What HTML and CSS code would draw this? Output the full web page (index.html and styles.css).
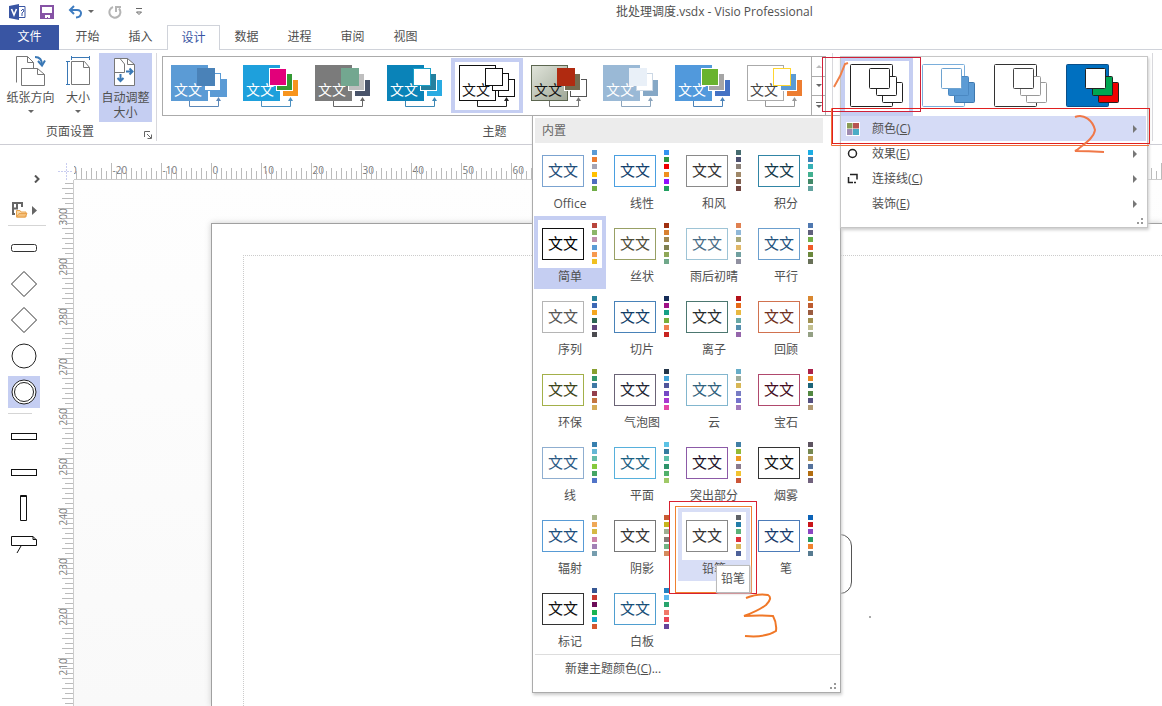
FILE: index.html
```html
<!DOCTYPE html>
<html lang="zh-CN">
<head>
<meta charset="utf-8">
<title>批处理调度.vsdx - Visio Professional</title>
<link rel="stylesheet" href="styles.css">
</head>
<body>
<header class="titlebar">
  <div class="quick-access">
    <svg class="app-icon" width="17" height="16" viewBox="0 0 17 16" aria-hidden="true">
      <path d="M9 2.500H16V13.500H9" fill="#fff" stroke="#3955a3"/>
      <path d="M0 2 10 0V16L0 14Z" fill="#3955a3"/>
      <path d="M2.5 5 5 11 7.5 5" fill="none" stroke="#fff" stroke-width="1.6"/>
      <path d="M12 7l2-2 1 2-2 2v3" fill="none" stroke="#3955a3"/>
    </svg>
    <button class="qa-button" aria-label="保存">
      <svg width="14" height="14" viewBox="0 0 14 14"><path d="M1 1H13V13H1Z" fill="#fff" stroke="#8653a5" stroke-width="2"/><path d="M1 8H13V13H10V10H5V13H1Z" fill="#8653a5"/><path d="M5 10H10V13H8V11H7V13H5Z" fill="#fff"/></svg>
    </button>
    <button class="qa-button" aria-label="撤消">
      <svg width="26" height="14" viewBox="0 0 26 14"><path d="M2 5H9C15 5 14 12 8 12.500" fill="none" stroke="#3e7cc0" stroke-width="2"/><path d="M6 1 2 5 6 9" fill="none" stroke="#3e7cc0" stroke-width="2"/><path d="M20 5H26L23 8Z" fill="#666"/></svg>
    </button>
    <button class="qa-button" aria-label="重复">
      <svg width="14" height="14" viewBox="0 0 14 14"><path d="M5 2A5.500 5.500 0 1 0 11 3.500" fill="none" stroke="#b5b5b5" stroke-width="2"/><path d="M8 7V2H13" fill="none" stroke="#b5b5b5" stroke-width="2"/></svg>
    </button>
    <button class="qa-button" aria-label="自定义快速访问工具栏">
      <svg width="6" height="8" viewBox="0 0 6 8"><path d="M0 .5H6" stroke="#666"/><path d="M.5 4H5.500L3 6.500Z" fill="#fff" stroke="#666"/></svg>
    </button>
  </div>
  <h1 class="doc-title">批处理调度.vsdx - Visio Professional</h1>
</header>

<nav class="tabs">
  <button class="tab tab-file">文件</button>
  <button class="tab">开始</button>
  <button class="tab">插入</button>
  <button class="tab tab-active">设计</button>
  <button class="tab">数据</button>
  <button class="tab">进程</button>
  <button class="tab">审阅</button>
  <button class="tab">视图</button>
</nav>

<section class="ribbon">
  <div class="group group-page">
    <div class="group-body">
      <button class="big-button">
        <svg width="32" height="32" viewBox="0 0 32 32"><path d="M1.500 27.500V1.500H12.500L18.500 7.500V13" fill="#fff" stroke="#777"/><path d="M12.500 1.500V7.500H18.500" fill="none" stroke="#777"/><path d="M6.500 13.500H22.500L29.500 19.500V30.500H6.500Z" fill="#fff" stroke="#777"/><path d="M22.500 13.500V19.500H29.500" fill="none" stroke="#777"/><path d="M20 2Q27 2 27 10" fill="none" stroke="#3a78b5" stroke-width="2"/><path d="M23 6 27 10.500 30 5.500" fill="none" stroke="#3a78b5" stroke-width="2"/></svg>
        <span>纸张方向</span><i class="caret"></i>
      </button>
      <button class="big-button">
        <svg width="32" height="32" viewBox="0 0 32 32"><path d="M9.500 6.500H22.500L27.500 12.500V29.500H9.500Z" fill="#fff" stroke="#777"/><path d="M21.500 6.500V12.500H27.500" fill="none" stroke="#777"/><path d="M9 2.500H28M9.500 1V5M27.500 1V5M5.500 7V29M4 6.500H8M4 29.500H8" stroke="#3a78b5"/></svg>
        <span>大小</span><i class="caret"></i>
      </button>
      <button class="big-button big-button-on">
        <svg width="32" height="32" viewBox="0 0 32 32"><path d="M4.500 3.500H17.500L24.500 9.500V30.500H4.500Z" fill="#fff" stroke="#777"/><path d="M17.500 3.500V9.500H24.500M4.500 17.500H14.500V9L10 3.500" fill="none" stroke="#777"/><path d="M10.500 19V26M7.500 23 10.500 26 13.500 23M16 16.500H22M19.500 13.500 22.500 16.500 19.500 19.500" fill="none" stroke="#3a78b5" stroke-width="2"/></svg>
        <span>自动调整</span><span>大小</span>
      </button>
    </div>
    <div class="group-footer">
      <span class="group-label">页面设置</span>
      <button class="launcher" aria-label="页面设置对话框">
        <svg width="8" height="8" viewBox="0 0 8 8"><path d="M.5 6V.5H6M3 3 7 7M7.500 3.500V7.500H3.500" fill="none" stroke="#666"/></svg>
      </button>
    </div>
  </div>
  <div class="group group-themes">
    <div class="gallery">
      <div class="gallery-items" id="themes"></div>
      <div class="gallery-scroll">
        <button aria-label="向上"><svg width="6" height="4" viewBox="0 0 6 4"><path d="M0 4H6L3 1Z" fill="#bbb"/></svg></button>
        <button aria-label="向下"><svg width="6" height="4" viewBox="0 0 6 4"><path d="M0 0H6L3 3Z" fill="#666"/></svg></button>
        <button aria-label="更多"><svg width="6" height="7" viewBox="0 0 6 7"><path d="M0 .5H6" stroke="#666"/><path d="M0 3H6L3 6Z" fill="#666"/></svg></button>
      </div>
    </div>
    <div class="group-footer"><span class="group-label">主题</span></div>
  </div>
  <div class="group group-variants"></div>
</section>

<main class="workspace">
  <aside class="shapes">
    <button class="expand" aria-label="展开形状窗口"><svg width="6" height="8" viewBox="0 0 6 8"><path d="M1 .5 4.500 4 1 7.500" fill="none" stroke="#555" stroke-width="2"/></svg></button>
    <button class="stencils" aria-label="更多形状">
      <svg width="26" height="18" viewBox="0 0 26 18"><path d="M1 2H11M2 2V14M1 7.500H7M1 13H4M6 2V7M11 1V6" fill="none" stroke="#666" stroke-width="2"/><path d="M5.500 16V9.500H9L10 11H15V16Z" fill="#f8d9a8" stroke="#e8a24c"/><path d="M5.500 16 8 12.500H16L14 16Z" fill="#f5bf79" stroke="#e8a24c"/><path d="M21 5V14L26 9.500Z" fill="#666"/></svg>
    </button>
    <hr class="rule rule-wide">
    <button class="shape" aria-label="圆角矩形"><svg width="32" height="32"><rect x="3.500" y="12.500" width="25" height="7" rx="2" fill="none" stroke="#333"/></svg></button>
    <button class="shape" aria-label="判定"><svg width="32" height="32"><path d="M3.500 16 16 3.500 28.500 16 16 28.500Z" fill="none" stroke="#333"/></svg></button>
    <button class="shape" aria-label="条件"><svg width="32" height="32"><path d="M3.500 16 16 3.500 28.500 16 16 28.500Z" fill="none" stroke="#333"/></svg></button>
    <button class="shape" aria-label="圆"><svg width="32" height="32"><circle cx="16" cy="16" r="12" fill="none" stroke="#222"/></svg></button>
    <button class="shape shape-on" aria-label="双圆"><svg width="32" height="32"><circle cx="16" cy="16" r="12" fill="#fff" stroke="#222"/><circle cx="16" cy="16" r="9.500" fill="#fff" stroke="#222"/></svg></button>
    <hr class="rule">
    <button class="shape" aria-label="水平条"><svg width="32" height="32"><rect x="3.500" y="13.500" width="25" height="6" fill="none" stroke="#111"/></svg></button>
    <button class="shape" aria-label="水平条 2"><svg width="32" height="32"><rect x="3.500" y="13.500" width="25" height="6" fill="none" stroke="#111"/></svg></button>
    <button class="shape" aria-label="垂直条"><svg width="32" height="32"><path d="M12.500 3.500H18.500V28.500H12.500ZM12.500 4.500H18.500" fill="none" stroke="#111"/></svg></button>
    <button class="shape" aria-label="注释"><svg width="32" height="32"><path d="M3.500 8.500H25L28.500 12V17.500H3.500ZM25 8.500V11.500H28.500M13 18 9 25" fill="none" stroke="#111"/></svg></button>
  </aside>
  <svg class="ruler-corner" width="16" height="17" aria-hidden="true"><path d="M0 8.500H14M8.500 0V17" stroke="#c9cdf0" stroke-dasharray="2 1"/></svg>
  <div class="ruler-h" id="ruler-h"></div>
  <div class="ruler-v" id="ruler-v"></div>
  <div class="canvas">
    <div class="sheet">
      <div class="sheet-margin"></div>
      <div class="drawn-shape"></div>
      <div class="drawn-dot"></div>
    </div>
  </div>
</main>

<section class="popup colors-popup" aria-label="主题颜色">
  <h2 class="popup-head">内置</h2>
  <div class="color-grid" id="colors"></div>
  <div class="popup-foot">
    <button class="new-colors">新建主题颜色(<u>C</u>)...</button>
    <svg class="grip" width="6" height="6"><path d="M4 0h2v2H4zM0 4h2v2H0zM4 4h2v2H4z" fill="#999"/></svg>
  </div>
</section>

<section class="popup variants-popup" aria-label="变体">
  <div class="variant-items" id="variants"></div>
  <button class="menu-row menu-row-on">
    <svg width="14" height="14"><path d="M0 0H14V14H0Z" fill="#fff"/><path d="M1 1H6.500V6.500H1Z" fill="#8a9c55"/><path d="M7 1H13V6.500H7Z" fill="#b85450"/><path d="M1 7H6.500V13H1Z" fill="#a08cb0"/><path d="M7 7H13V13H7Z" fill="#4bacc6"/></svg>
    <span>颜色(<u>C</u>)</span><i class="arrow"></i>
  </button>
  <button class="menu-row">
    <svg width="14" height="14"><circle cx="6.500" cy="6.500" r="4" fill="none" stroke="#222" stroke-width="1.500"/></svg>
    <span>效果(<u>E</u>)</span><i class="arrow"></i>
  </button>
  <button class="menu-row">
    <svg width="14" height="14"><path d="M4 2.500H11V7.500M2.500 5V10.500H7M8 10.500H10" fill="none" stroke="#222" stroke-width="1.500"/></svg>
    <span>连接线(<u>C</u>)</span><i class="arrow"></i>
  </button>
  <button class="menu-row">
    <svg width="14" height="14"></svg>
    <span>装饰(<u>E</u>)</span><i class="arrow"></i>
  </button>
  <svg class="grip" width="6" height="6"><path d="M4 0h2v2H4zM0 4h2v2H0zM4 4h2v2H4z" fill="#999"/></svg>
</section>

<svg class="marks" width="1162" height="706" viewBox="0 0 1162 706" fill="none" aria-hidden="true">
  <rect x="822.5" y="57.500" width="98" height="54" stroke="#d02038"/>
  <path d="M834 87Q841 76 845 64L848 63" stroke="#f08048" stroke-width="2"/>
  <path d="M1149.500 108.500H831.500V145.500H1149" stroke="#f07038"/>
  <rect x="832.5" y="108.500" width="317" height="35" stroke="#e02020"/>
  <path d="M1075 117C1084 113 1093 121 1095 130C1094 138 1084 144 1077 150L1075 151Q1088 151 1104 152" stroke="#f07848" stroke-width="2"/>
  <rect x="669.5" y="501.500" width="87" height="92" stroke="#d82030"/>
  <rect x="675.5" y="506.500" width="76" height="86" stroke="#ef8030"/>
  <path d="M746 598Q758 593 768 595Q773 598 766 605Q758 611 744 616Q760 615 773 616Q777 623 776 631Q765 638 745 636" stroke="#f07828" stroke-width="2"/>
</svg>
<div class="tooltip" role="tooltip">铅笔</div>
<script src="script.js"></script>
</body>
</html>
```

FILE: styles.css
```css
* { box-sizing: border-box; }

body {
  margin: 0;
  height: 100vh;
  overflow: hidden;
  position: relative;
  display: flex;
  flex-direction: column;
  background: #fff;
  color: #505050;
  font: 12px/16px "Open Sans", "Noto Sans CJK SC", sans-serif;
}

button {
  margin: 0;
  padding: 0;
  border: 0;
  background: none;
  color: inherit;
  font: inherit;
}

svg { display: block; flex: none; }
h1, h2 { margin: 0; font: inherit; }

/* Title bar */
.titlebar { display: flex; align-items: center; height: 25px; padding: 0 0 2px 9px; flex: none; }
.quick-access { display: flex; align-items: center; gap: 14px; width: 607px; }
.doc-title { white-space: nowrap; }

/* Tabs */
.tabs { display: flex; flex: none; height: 25px; box-shadow: inset 0 -1px #d0d3da; }
.tab { width: 53px; padding-bottom: 1px; }
.tab-file { width: 59px; margin-right: 2px; background: #3955a3; color: #fff; }
.tab-active { border: 1px solid #d0d3da; border-bottom: 0; background: #fff; color: #3955a3; }

/* Ribbon */
.ribbon { display: flex; flex: none; height: 95px; padding: 3px 0; border-bottom: 1px solid #cdcdd4; }
.group { display: flex; flex-direction: column; justify-content: space-between; flex: none; border-right: 1px solid #d8d8dc; }
.group-page { width: 157px; }
.group-body { display: flex; gap: 4px; padding-left: 4px; }
.big-button { display: flex; flex-direction: column; align-items: center; width: 53px; height: 69px; padding: 2px 0; line-height: 15px; white-space: nowrap; }
.big-button svg { margin-bottom: 3px; }
.big-button:nth-child(2) { width: 34px; }
.big-button-on { background: #c5cef2; }
.caret { margin-top: 5px; border: 3px solid transparent; border-top-color: #666; border-bottom: 0; }
.group-footer { display: flex; align-items: center; justify-content: center; height: 18px; }
.group-page .group-footer { padding-right: 4px; }
.group-page .group-label { flex: 1; padding-right: 4px; text-align: center; }
.launcher { padding-top: 5px; }
.group-themes { width: 676px; padding-top: 3px; }
.group-variants { width: 320px; }

.gallery { display: flex; width: 664px; height: 60px; margin-left: 5px; border: 1px solid #ababab; }
.gallery-items { display: flex; flex: 1; padding-top: 1px; }
.theme { width: 72px; height: 55px; }
.theme-on, .variant-on { background: #c5cef2; }
.theme-text { font-size: 14px; }
.gallery-scroll { display: flex; flex-direction: column; width: 14px; border-left: 1px solid #ababab; }
.gallery-scroll button { display: grid; place-items: center; flex: 1; }
.gallery-scroll button + button { border-top: 1px solid #ababab; }

/* Workspace */
.workspace {
  flex: 1;
  min-height: 0;
  display: grid;
  grid-template: 17px 1fr / 58px 16px 1fr;
  padding-top: 18px;
}
.shapes { grid-row: 1 / 3; display: flex; flex-direction: column; align-items: flex-start; gap: 4px; padding: 9px 0 0 8px; }
.expand { margin-left: 26px; height: 14px; display: grid; place-items: center; }
.stencils { margin: 9px 0 0 3px; height: 22px; display: grid; place-items: center; }
.rule { width: 24px; height: 1px; margin: 1px 0 2px; border: 0; background: #d5d5d5; }
.rule-wide { width: 38px; margin: 0 0 2px; }
.shape { flex: none; width: 32px; height: 32px; }
.shape-on { background: #c5cef2; }
.ruler-h, .ruler-v { overflow: hidden; min-width: 0; min-height: 0; }
.ruler-h { border-bottom: 1px solid #ccc; }
.ruler-v { grid-column: 2; border-right: 1px solid #ccc; }
.ruler-text { font: 10px "Open Sans", sans-serif; fill: #777; }
.canvas { min-width: 0; min-height: 0; overflow: hidden; padding: 43px 0 0 137px; background: linear-gradient(#fefefe, #f9f9f9); }
.sheet { position: relative; height: 100%; padding: 31px 0 0 31px; background: #fff; border: solid #a0a0a0; border-width: 1px 0 0 1px; box-shadow: 0 0 6px #ccc; }
.sheet-margin { height: 100%; border: dotted #ccc; border-width: 1px 0 0 1px; }
.drawn-shape { position: absolute; left: 560px; top: 310px; width: 80px; height: 60px; border: 1px solid #555; border-radius: 12px; }
.drawn-dot { position: absolute; left: 657px; top: 392px; width: 2px; height: 2px; background: #aaa; }

/* Popups */
.popup { position: absolute; background: #fff; border: 1px solid #c6c6c6; box-shadow: 1px 2px 3px #ccc; }
.colors-popup { left: 532px; top: 115px; width: 309px; border-color: #ababab; }
.popup-head { margin: 2px 17px 0 2px; padding: 5px 7px; height: 25px; background: #ececec; color: #666; }
.color-grid { display: grid; grid-template-columns: repeat(4, 72px); grid-auto-rows: 73px; padding-left: 1px; }
.color { display: flex; flex-direction: column; align-items: center; padding: 4px; }
.color-on { background: #c5cef2; }
.color-hover { background: #d8def6; }
.preview { display: flex; align-items: center; justify-content: space-between; width: 64px; height: 48px; padding: 0 5px 1px 4px; background: #fff; }
.sample { width: 42px; height: 32px; border: 1px solid; font-size: 15px; line-height: 29px; text-align: center; }
.swatches { display: flex; flex-direction: column; justify-content: space-between; height: 41px; }
.swatches i { width: 5px; height: 5px; }
.color-label { line-height: 17px; white-space: nowrap; }
.popup-foot { display: flex; justify-content: space-between; align-items: flex-end; height: 38px; margin: 0 0 0 2px; padding: 0 4px 3px 30px; border-top: 1px solid #ddd; }
.new-colors { align-self: flex-start; padding-top: 6px; }

.variants-popup { left: 840px; top: 56px; width: 308px; height: 172px; display: flex; flex-direction: column; }
.variant-items { display: flex; height: 59px; }
.variant { width: 72px; height: 59px; }
.menu-row { display: flex; align-items: center; gap: 12px; height: 25px; padding: 0 9px 0 5px; margin-right: 1px; text-align: left; }
.menu-row-on { background: #d5dbf6; }
.menu-row span { flex: 1; }
.arrow { border: 4px solid transparent; border-left-color: #777; border-right: 0; }
.variants-popup .grip { margin: auto 4px 3px auto; }

.marks { position: absolute; left: 0; top: 0; pointer-events: none; }
.tooltip { position: absolute; left: 716px; top: 565px; padding: 5px 4px; border: 1px solid #bbb; background: #fff; box-shadow: 1px 1px 2px #ccc; }
```

FILE: script.js
```js
// Theme thumbnails: [panel, panel border, front, front border, middle, middle border, back, back border, text, connector]
const themes = [
  ["#5b9bd5", "#5b9bd5", "#4a82b8", "#4a82b8", "#fff", "#5b9bd5", "#5b9bd5", "#5b9bd5", "#fff", "#5b87b8"],
  ["#1ea0dc", "#1ea0dc", "#e2007a", "#fff", "#339933", "#fff", "#f7941d", "#fff", "#fff", "#4a8fc0"],
  ["#7b7b7b", "#7b7b7b", "#73a790", "#73a790", "#bfbfbf", "#fff", "#49546a", "#fff", "#fff", "#666"],
  ["#0a83b8", "#0a83b8", "#fff", "#1ca0c8", "#24809f", "#fff", "#29abe2", "#fff", "#fff", "#3b87b5"],
  ["#fff", "#111", "#fff", "#111", "#fff", "#111", "#fff", "#111", "#111", "#222"],
  ["url(#stone)", "#5c6650", "#b02a10", "#b02a10", "#756b50", "#fff", "#fff", "#555", "#111", "#777"],
  ["#9ab9d6", "#9ab9d6", "#e9f0f8", "#e9f0f8", "#fff", "#ccd8e5", "#86a8c6", "#fff", "#fff", "#8ca5bd"],
  ["#5199dc", "#5199dc", "#68b32e", "#fff", "#a5a5a5", "#fff", "#4472c4", "#fff", "#fff", "#4a82b8"],
  ["#fff", "#aaa", "#fff", "#ffd530", "#5b9bd5", "#fff", "#ed7d31", "#fff", "#444", "#999"]
];

document.getElementById("themes").innerHTML = themes.map((t, i) => `
  <button class="theme${i === 4 ? " theme-on" : ""}" aria-label="主题 ${i + 1}">
    <svg width="72" height="55">
      <defs><linearGradient id="stone" x2="1" y2="1"><stop stop-color="#e0e4da"/><stop offset="1" stop-color="#a0a898"/></linearGradient></defs>
      ${i === 4 ? '<rect x="4" y="4" width="64" height="48" fill="#fff"/>' : ""}
      <rect x="8.5" y="7.5" width="36" height="35" fill="${t[0]}" stroke="${t[1]}"/>
      <rect x="47.5" y="21.5" width="16" height="17" fill="${t[6]}" stroke="${t[7]}"/>
      <rect x="41.5" y="15.5" width="16" height="17" fill="${t[4]}" stroke="${t[5]}"/>
      <path d="M26.500 43V48.500H55.500V41" fill="none" stroke="${t[9]}"/><path d="M53 43 55.500 39 58 43Z" fill="${t[9]}"/>
      <text class="theme-text" x="11" y="37" fill="${t[8]}">文文</text>
      <rect x="34.5" y="10.500" width="17" height="17" fill="${t[2]}" stroke="${t[3]}"/>
    </svg>
  </button>`).join("");

// Variant thumbnails: [panel, panel border, front, front border, middle, middle border, back, back border]
const variants = [
  ["#fff", "#222", "#fff", "#222", "#fff", "#222", "#fff", "#222"],
  ["#fff", "#7aaedb", "#fff", "#6ea3d0", "#5b9bd5", "#4a88c2", "#5b9bd5", "#3e78ae"],
  ["#fff", "#333", "#fff", "#444", "#fff", "#999", "#fff", "#999"],
  ["#0070c0", "#0a4f8a", "#fff", "#222", "#00a651", "#222", "#f00000", "#222"]
];

document.getElementById("variants").innerHTML = variants.map((v, i) => `
  <button class="variant${i === 0 ? " variant-on" : ""}" aria-label="变体 ${i + 1}">
    <svg width="72" height="59">
      ${i === 0 ? '<rect x="4" y="4" width="64" height="51" fill="#fff"/>' : ""}
      <rect x="9.5" y="7.500" width="42" height="42" rx="1" fill="${v[0]}" stroke="${v[1]}"/>
      <rect x="41.5" y="25.500" width="20" height="20" rx="1" fill="${v[6]}" stroke="${v[7]}"/>
      <rect x="35.5" y="19.500" width="20" height="19" rx="1" fill="${v[4]}" stroke="${v[5]}"/>
      <rect x="28.5" y="11.500" width="20" height="20" rx="1" fill="${v[2]}" stroke="${v[3]}"/>
    </svg>
  </button>`).join("");

// Color sets: [name, frame, text, six swatches]
const colors = [
  ["Office", "#7ba3d0", "#1f4e79", "#5b9bd5 #ed7d31 #a5a5b5 #ffc000 #4f6cc0 #70ad47"],
  ["线性", "#4a9fe0", "#123f6d", "#3494f0 #2f9645 #f00000 #f09020 #9010ff #20a060"],
  ["和风", "#8a8a8a", "#333", "#466c70 #4c5070 #8a8078 #a08868 #806050 #704540"],
  ["积分", "#3185a5", "#103848", "#1cade4 #3c80b8 #35b0b5 #42b090 #418868 #62a39f"],
  ["简单", "#111", "#000", "#b8453c #8cb66a #c090ae #5b9bd5 #f79a50 #f0c020"],
  ["丝状", "#98a065", "#4d4c38", "#a03010 #d88030 #a08850 #808050 #90a858 #70a88a"],
  ["雨后初晴", "#9ec4d6", "#476b85", "#e08050 #90b8d8 #a8a878 #e0b868 #70a0a0 #9090a0"],
  ["平行", "#6b9fce", "#23527c", "#4f78b0 #60607c #70ad47 #f05a28 #6b883c #687058"],
  ["序列", "#b5b5b5", "#555", "#278098 #3c68b5 #f5a720 #2d6754 #60447a #4b4b50"],
  ["切片", "#4982b8", "#103c66", "#152c58 #a01088 #16a085 #78b03c #f08050 #c82420"],
  ["离子", "#4c7770", "#252b2b", "#b31118 #e66a18 #e8b840 #68a8a5 #558fae #9565ab"],
  ["回顾", "#d1724f", "#6f3020", "#d98730 #bd5b30 #9b5c40 #a09050 #c3c090 #94a084"],
  ["环保", "#a3b04a", "#3c451a", "#88a030 #32966c #4079a5 #943f4c #c47540 #d5ad59"],
  ["气泡图", "#6b6376", "#202432", "#24364a #40a3d8 #50559c #7548c5 #aa38d0 #e446a8"],
  ["云", "#82b6ce", "#2f617c", "#67adc8 #9eac9c #d8b755 #787cc4 #7472cc #a27abc"],
  ["宝石", "#b0496d", "#440c22", "#ac2148 #e98720 #1c6478 #538842 #555080 #b09973"],
  ["线", "#8faed0", "#2b5a84", "#387fae #65b7d5 #65bca7 #85c93c #45a564 #5174c8"],
  ["平面", "#57b0dc", "#1a6082", "#5dc3e5 #357ca0 #5bbfa8 #2d936a #51b16b #a0c967"],
  ["突出部分", "#8c5aa7", "#211229", "#417fa5 #92ba35 #ef9820 #8b7b8d #f2c330 #cb5638"],
  ["烟雾", "#333", "#111", "#5d5360 #758750 #b99a57 #54719b #b36d10 #71627d"],
  ["辐射", "#589bd5", "#1c4e7c", "#a7b58c #efa857 #d5b944 #cc83aa #a281b5 #769dae"],
  ["阴影", "#777", "#333", "#c95b32 #c7b51e #9fae91 #857a75 #73b384 #d58b5d"],
  ["铅笔", "#888", "#333", "#5f6267 #237da9 #5bb178 #de323d #d8b65d #4d6199"],
  ["笔", "#4c7bb8", "#15396c", "#0b62b7 #ca1519 #8b45c2 #259b63 #f1832e #577b91"],
  ["标记", "#333", "#111", "#365793 #c63931 #6c0c58 #1ab352 #16a5cc #d45830"],
  ["白板", "#4f9ed0", "#174f78", "#2381c1 #5bb7ed #28a56d #f17868 #e94455 #66449a"]
];

document.getElementById("colors").innerHTML = colors.map(([name, frame, text, list]) => `
  <button class="color${name === "简单" ? " color-on" : name === "铅笔" ? " color-hover" : ""}">
    <span class="preview">
      <span class="sample" style="border-color:${frame};color:${text}">文文</span>
      <span class="swatches">${list.split(" ").map(c => `<i style="background:${c}"></i>`).join("")}</span>
    </span>
    <span class="color-label">${name}</span>
  </button>`).join("");

// Rulers: one tick per unit, five pixels apart, a label at every tenth
// that lies clear of the open popups and of the window's bottom edge
const rulerH = document.getElementById("ruler-h");
const rulerV = document.getElementById("ruler-v");
const width = rulerH.clientWidth;
const height = rulerV.clientHeight;
const popupLeft = document.querySelector(".colors-popup").offsetLeft - rulerH.offsetLeft;

let horizontal = '<text class="ruler-text" x="-3" y="11">0</text>';
for (let n = -27; 137 + n * 5 < width; n++) {
  const x = 137.5 + n * 5;
  const top = n % 10 === 0 ? 0 : n % 2 ? 8 : 5;
  horizontal += `<path d="M${x} ${top}V16" stroke="#bbb"/>`;
  if (n % 10 === 0 && x + 14 < popupLeft) horizontal += `<text class="ruler-text" x="${x + 1}" y="11">${n}</text>`;
}
rulerH.innerHTML = `<svg width="${width}" height="16">${horizontal}</svg>`;

let vertical = "";
for (let n = 305; 28 + (300 - n) * 5 < height; n--) {
  const y = 28.5 + (300 - n) * 5;
  const left = n % 10 === 0 ? 0 : n % 2 ? 7 : 4;
  vertical += `<path d="M${left} ${y}H15" stroke="#bbb"/>`;
  if (n % 10 === 0 && y + 20 < height) vertical += `<text class="ruler-text" transform="translate(9 ${y + 17}) rotate(-90)">${n}</text>`;
}
rulerV.innerHTML = `<svg width="15" height="${height}">${vertical}</svg>`;
```
